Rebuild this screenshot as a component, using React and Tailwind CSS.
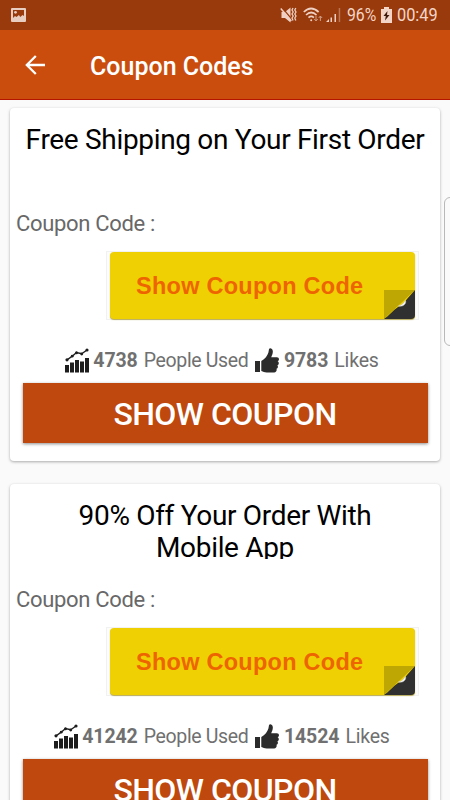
import React from "react";

function StatusBar() {
  return (
    <div className="flex h-[30px] items-center bg-[#983a0c] text-[#f3d5c8]">
      <svg className="ml-[11px] h-[14px] w-[15px] shrink-0" viewBox="0 0 15 14">
        <rect width="15" height="14" rx="1" fill="#e8cdc1" />
        <path d="M2 2h11v6l-1.5-1-2.2 2-1.4-2L5.5 9 4 8 2 10z" fill="#983a0c" />
        <circle cx="4.5" cy="4.3" r="1.4" fill="#e8cdc1" />
      </svg>
      <svg className="ml-[254px] h-[18px] w-[17px] shrink-0" viewBox="0 0 17 18" fill="#efd0c3">
        <path d="M1.500 6H5l5.500-4.500v15L5 12H1.500z" />
        <path d="M2 1.500l10 12" stroke="#983a0c" strokeWidth="1.200" />
        <path d="M.8 2.500l10.500 12.500" stroke="#efd0c3" strokeWidth="1.500" />
        <path d="M13 2l-1 2 1.200 2-1.200 2 1.200 2-1.200 2 1 2.500M15.800 2l-1 2 1.200 2-1.200 2 1.200 2-1.200 2 1 2.500" fill="none" stroke="#efd0c3" strokeWidth="1.300" />
      </svg>
      <svg className="ml-[6px] h-[18px] w-[20px] shrink-0" viewBox="0 0 20 18" fill="none" stroke="#efd0c3" strokeWidth="1.7">
        <path d="M.8 6Q8 -1 15.600 6M3 9q5.200-5 10.500 0M5.500 11.600q2.700-2.400 5.400 0" />
        <circle cx="8.200" cy="14.200" r="1" fill="#efd0c3" stroke="none" />
        <path d="M13 9.500v5M11.300 13l1.700 2 1.700-2M17.400 15v-5M15.700 12l1.700-2 1.700 2" stroke="#cf9d86" strokeWidth="1" />
      </svg>
      <svg className="ml-[3px] h-[16px] w-[15px] shrink-0" viewBox="0 0 15 16">
        <path d="M0 15l3-3v3zM4.500 10.500h1.500V15H4.500zM8.500 7H10v8H8.500z" fill="#efd0c3" />
        <path d="M12.700 1h1.500v14h-1.500z" fill="#bb7656" />
      </svg>
      <span className="ml-[6px] w-[30px] origin-left scale-x-[0.83] whitespace-nowrap text-[19px] leading-[30px]">96%</span>
      <svg className="ml-[4px] h-[16px] w-[11px] shrink-0" viewBox="0 0 11 16">
        <path d="M3 0h5v2h3v14H0V2h3z" fill="#f3d5c8" />
        <path d="M6.500 4L2.500 9h2.300l-.8 4.500L8.500 8H6z" fill="#3d180b" />
      </svg>
      <span className="ml-[5px] w-[42px] origin-left scale-x-[0.86] whitespace-nowrap text-[19px] leading-[30px]">00:49</span>
    </div>
  );
}

function ChartIcon() {
  return (
    <svg className="h-[25px] w-[24px] shrink-0" viewBox="0 0 24 25" fill="#1d1d1d">
      <path d="M0 17h4v7.500H0zM5 14.500h4v10H5zM10 12h4v12.500h-4zM15 13.500h4v11h-4zM20 10h4v14.500h-4z" />
      <path d="M2 11.800L7.500 8l4-3.500 5.200 1.200L22 2" fill="none" stroke="#1d1d1d" strokeWidth="1.400" />
      <circle cx="2" cy="11.800" r="1.600" />
      <circle cx="7.200" cy="8.200" r="1.400" />
      <circle cx="11.500" cy="4.800" r="1.500" />
      <circle cx="16.700" cy="6" r="1.400" />
      <circle cx="22" cy="2" r="1.600" />
    </svg>
  );
}

function LikeIcon() {
  return (
    <svg className="h-[25px] w-[24px] shrink-0" viewBox="0 0 24 25" fill="#2b2b2b">
      <path d="M0 13h5v11H0z" />
      <path d="M6.300 13C10 11 12.500 7.500 13.400 4.500L14 1.300C14.500-.5 17.500.3 17.800 3c.2 2-.7 4.300-1.600 6.300h5.600c2.500 0 2.900 3 .9 4 1.700 1 1.300 3.400-.3 3.900 1 1.200.5 3.100-.9 3.500.6 1.600-.3 3.700-2.400 3.800h-7.500c-2.200 0-3.200-1-5.300-1.500z" />
    </svg>
  );
}

function CodeBanner() {
  return (
    <div className="ml-[96px] flex h-[69px] w-[313px] border border-[#f1f1f1] bg-[#fcfcfc] pl-[3px]">
      <div className="flex h-[67px] w-[305px] items-center overflow-hidden rounded-[4px] bg-[#efd002] shadow-[0_1px_1px_#b9aa59]">
        <span className="w-[274px] whitespace-nowrap pl-[26px] pt-[2px] font-['Liberation_Sans',Arial,sans-serif] text-[23.5px] font-bold tracking-[0.26px] text-[#ee6500]">
          Show Coupon Code
        </span>
        <svg className="h-[29px] w-[31px] shrink-0 self-end" viewBox="0 0 31 29">
          <path d="M0 0h31L0 29z" fill="#bea603" />
          <path d="M31 0v29H0C5 26 9 20 14 17c4-2 6-4 9-8z" fill="#303030" />
          <path d="M14.500 16c3-.8 5-2.500 7-5.500 1 3-2 6.500-7 5.500z" fill="#fff" stroke="#ccc" strokeWidth=".6" />
        </svg>
      </div>
    </div>
  );
}

function CouponCard({ title, used, likes }) {
  return (
    <article className="flex h-[353px] shrink-0 flex-col rounded-[4px] bg-white shadow-[0_1px_3px_rgba(0,0,0,0.32)]">
      <h2 className="mx-[10px] mt-[16px] h-[59px] overflow-hidden whitespace-pre-line text-center text-[28px] leading-[32px] tracking-[-0.32px] text-black">
        {title}
      </h2>
      <p className="ml-[6px] mt-[26.5px] h-[28px] text-[22px] leading-[28px] tracking-[-0.32px] text-[#686868]">Coupon Code :</p>
      <div className="mt-[13.5px]">
        <CodeBanner />
      </div>
      <div className="mt-[27px] flex h-[28px] items-center justify-center pr-[6px] text-[19.5px] leading-[28px] text-[#707070]">
        <span className="-mt-[2px] flex"><ChartIcon /></span>
        <b className="ml-[4px] font-bold tracking-[-0.1px]">{used}</b>
        <span className="ml-[6px] tracking-[-0.35px]">People Used</span>
        <span className="-mt-[2px] ml-[7px] flex"><LikeIcon /></span>
        <b className="ml-[4.5px] font-bold tracking-[-0.1px]">{likes}</b>
        <span className="ml-[6px] tracking-[-0.2px]">Likes</span>
      </div>
      <button className="mx-[12.5px] mt-[7.5px] h-[60px] bg-[#be480d] pt-[1px] text-[32px] font-medium leading-[60px] tracking-[-0.55px] text-white shadow-[0_1px_3px_rgba(0,0,0,0.45)]">
        SHOW COUPON
      </button>
    </article>
  );
}

const coupons = [
  { title: "Free Shipping on Your First Order", used: "4738", likes: "9783" },
  { title: "90% Off Your Order With\nMobile App", used: "41242", likes: "14524" },
];

export default function App() {
  return (
    <div className="relative h-[800px] w-[450px] overflow-hidden bg-[#fafafa] font-[Roboto,sans-serif]">
      <StatusBar />
      <header className="flex h-[70px] items-center border-b border-[#b51500] bg-[#ca4d0e] text-white">
        <svg className="ml-[25px] h-[20px] w-[20px]" viewBox="0 0 20 20" fill="none" stroke="white" strokeWidth="2.300">
          <path d="M20 10H1.800M10.800 1L1.800 10l9 9" />
        </svg>
        <h1 className="ml-[45px] mt-[4px] text-[25px] font-medium">Coupon Codes</h1>
      </header>
      <main className="flex flex-col gap-[23px] px-[10px] pt-[8px]">
        {coupons.map((c) => (
          <CouponCard key={c.used} {...c} />
        ))}
      </main>
      <div className="absolute left-[444px] top-[197px] h-[149px] w-[14px] rounded-[6px] border border-[#b8b8b8] bg-[#fafafa]" />
    </div>
  );
}
